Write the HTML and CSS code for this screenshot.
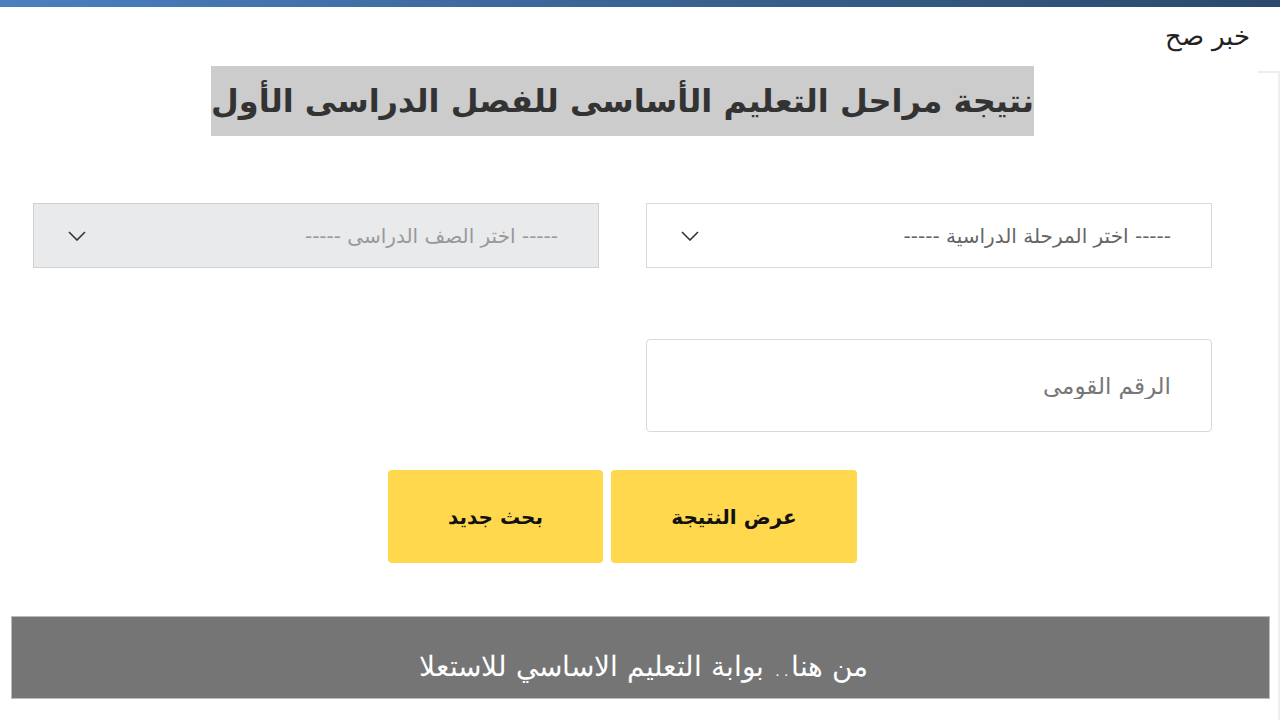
FILE: index.html
```html
<!DOCTYPE html>
<html lang="ar" dir="rtl">
<head>
    <meta charset="utf-8">
    <title>نتيجة مراحل التعليم الأساسى للفصل الدراسى الأول - خبر صح</title>
    <link rel="stylesheet" href="styles.css">
</head>
<body>
    <div class="topbar"></div>
    <div class="header">
        <a href="/" class="logo">خبر صح</a>
    </div>
    <div class="layout">
        <div class="sidebar"></div>
        <div class="main">
            <div class="title-wrap">
                <h1 class="title">نتيجة مراحل التعليم الأساسى للفصل الدراسى الأول</h1>
            </div>
            <form id="resultForm" class="form">
                <div class="form-row">
                    <div class="select-wrap">
                        <select id="stage" class="field">
                            <option>----- اختر المرحلة الدراسية -----</option>
                            <option>المرحلة الابتدائية</option>
                            <option>المرحلة الإعدادية</option>
                        </select>
                        <svg class="chevron" width="18" height="10" viewBox="0 0 18 10"><path d="M1 1l8 8 8-8" fill="none" stroke="#333" stroke-width="1.6"/></svg>
                    </div>
                    <div class="select-wrap">
                        <select id="grade" class="field disabled" disabled>
                            <option>----- اختر الصف الدراسى -----</option>
                        </select>
                        <svg class="chevron" width="18" height="10" viewBox="0 0 18 10"><path d="M1 1l8 8 8-8" fill="none" stroke="#333" stroke-width="1.6"/></svg>
                    </div>
                </div>
                <div class="form-row">
                    <input type="text" id="nationalId" class="field text-field" placeholder="الرقم القومى">
                </div>
                <div class="buttons">
                    <button type="submit" class="button">عرض النتيجة</button>
                    <button type="reset" class="button">بحث جديد</button>
                </div>
            </form>
        </div>
    </div>
    <div class="banner">من هنا.. بوابة التعليم الاساسي للاستعلا</div>
</body>
</html>
```

FILE: styles.css
```css
body {
    font-family: "DejaVu Sans", "Noto Sans", sans-serif;
    margin: 0;
    background: #fff;
    color: #333;
}
.topbar {
    height: 7px;
    background: linear-gradient(to right, #4a80c0, #3b6698 45%, #2b4a6b);
}
.header {
    height: 59px;
    padding-right: 30px;
    box-sizing: border-box;
}
.logo {
    display: inline-block;
    margin-top: 14px;
    font-size: 26px;
    font-weight: 300;
    color: #222;
    text-decoration: none;
    letter-spacing: -1px;
}
.layout {
    display: flex;
    gap: 13px;
}
.main {
    width: 1245px;
    padding: 0 33px;
    box-sizing: border-box;
}
.sidebar {
    flex: 1;
    margin-top: 5px;
    min-height: 660px;
    border-top: 2px solid #eee;
    border-right: 2px solid #eee;
}
.title-wrap {
    text-align: center;
}
.title {
    display: inline-block;
    width: 823px;
    height: 70px;
    margin: 0;
    background: #ccc;
    color: #333;
    font-size: 32px;
    line-height: 70px;
    font-weight: bold;
    letter-spacing: -1px;
    white-space: nowrap;
}
.form {
    margin-top: 67px;
}
.form-row {
    display: grid;
    grid-template-columns: 1fr 1fr;
    gap: 47px;
    margin-bottom: 71px;
}
.select-wrap {
    position: relative;
}
.field {
    display: block;
    width: 100%;
    height: 65px;
    padding: 0 40px;
    box-sizing: border-box;
    border: 1px solid #d9d9d9;
    background: #fff;
    color: #666;
    font-family: inherit;
    font-size: 20px;
    appearance: none;
    -webkit-appearance: none;
    direction: rtl;
}
.field.disabled {
    background: #e9eaec;
    border-color: #d0d0d0;
    color: #999;
    opacity: 1;
}
.chevron {
    position: absolute;
    left: 35px;
    top: 28px;
    pointer-events: none;
}
.text-field {
    height: 93px;
    border-radius: 4px;
    font-size: 23px;
}
.text-field::placeholder {
    color: #777;
}
.form-row:nth-child(2) {
    margin-bottom: 38px;
}
.buttons {
    display: flex;
    justify-content: center;
    gap: 8px;
}
.button {
    height: 93px;
    padding: 0;
    width: 246px;
    background-color: #ffd84d;
    color: #111;
    border: none;
    border-radius: 4px;
    font-family: inherit;
    font-size: 20px;
    font-weight: bold;
    cursor: pointer;
}
.button + .button {
    width: 215px;
}
.banner {
    position: fixed;
    left: 11px;
    right: 10px;
    bottom: 21px;
    height: 83px;
    box-sizing: border-box;
    border: 1px solid #bbb;
    background: #757575;
    color: #fff;
    font-size: 28px;
    font-weight: 300;
    line-height: 81px;
    padding-top: 9px;
    text-align: center;
    padding-left: 6px;
}
```
